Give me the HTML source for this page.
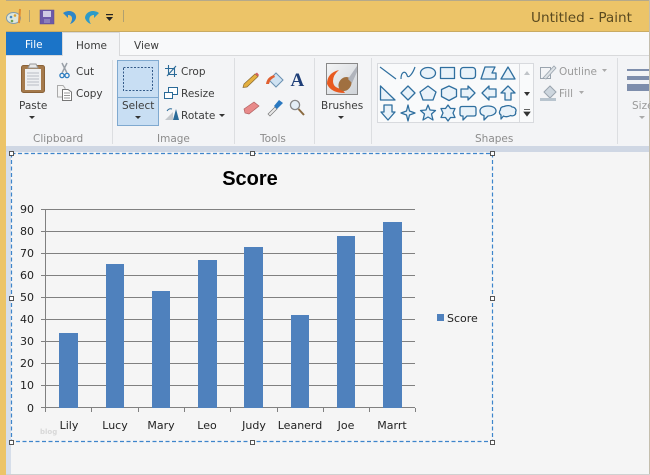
<!DOCTYPE html>
<html><head><meta charset="utf-8"><style>
html,body{margin:0;padding:0;background:#f5f5f5}
svg{display:block}
text{font-family:"DejaVu Sans","Liberation Sans",sans-serif;font-size:10.5px;fill:#3c3c3c}
.g{fill:#8c8c8c}.d{fill:#9a9a9a}.k{fill:#222;font-size:11px}
.s{fill:#e9f2f9;stroke:#2f6f9f;stroke-width:1.300;stroke-linejoin:round}
</style></head><body>
<svg width="650" height="475" viewBox="0 0 650 475" xmlns="http://www.w3.org/2000/svg">
<defs><linearGradient id="b" x1="0" y1="0" x2="1" y2="1"><stop offset="0" stop-color="#f4f5f6"/><stop offset="1" stop-color="#cfd3d8"/></linearGradient></defs>
<rect width="650" height="475" fill="#f5f5f5"/>
<!-- frame -->
<rect width="650" height="32" fill="#ecc468"/>
<rect width="650" height="1" fill="#b5a98a"/>
<rect y="31" width="650" height="1" fill="#c9ab62"/>
<rect y="0" width="6" height="475" fill="#ecc468"/>
<rect x="649" y="0" width="1" height="475" fill="#c4bead"/>
<rect x="6" y="474" width="644" height="1" fill="#d0d0d0"/>
<!-- QAT -->
<ellipse cx="13.500" cy="18" rx="7" ry="5.500" fill="#dfe6da" stroke="#7f9bb0"/>
<circle cx="11" cy="17" r="1.300" fill="#4a8ac0"/><circle cx="15" cy="15.500" r="1.300" fill="#d9a030"/><circle cx="12" cy="21" r="1.300" fill="#70a050"/>
<path d="M20 9L19 23" stroke="#e08a30" stroke-width="2"/>
<rect x="29" y="10" width="1" height="12" fill="#b0a070"/>
<rect x="40" y="10" width="14" height="14" fill="#6d5aa8" stroke="#5a4a90" stroke-width=".5"/>
<rect x="43" y="11" width="8" height="6" fill="#d0cce4"/><rect x="44" y="19" width="6" height="4" fill="#8c80bc"/>
<path d="M65 12C71 9 77 13 76 18C75 21 73 23 70 24C73 20 73 15 68 15L68 18L63 13L68 10Z" fill="#2d86c8"/>
<path d="M97 12C91 9 85 13 85 18C86 21 88 23 91 24C88 20 89 15 94 15L94 18L99 13L94 10Z" fill="#2d9bc8"/>
<rect x="106" y="14" width="7" height="1.200" fill="#222"/><path d="M106 17H113L109.500 21Z" fill="#222"/>
<rect x="123" y="10" width="1" height="12" fill="#b0a070"/>
<text x="531" y="22" style="font-size:13.600px;fill:#5a4a20">Untitled - Paint</text>
<!-- tabs -->
<rect x="6" y="32" width="643" height="24" fill="#f8f9fa"/>
<rect x="6" y="55" width="643" height="1" fill="#d8d9db"/>
<rect x="6" y="32" width="56" height="23" fill="#1b74c8"/>
<text x="25" y="48" style="fill:#fff;font-size:10.500px">File</text>
<rect x="62.500" y="32.500" width="57" height="24" fill="#f3f4f6" stroke="#d8d9db"/>
<rect x="63" y="54" width="56" height="3" fill="#f3f4f6"/>
<text x="76" y="49">Home</text>
<text x="134" y="49">View</text>
<!-- ribbon -->
<rect x="6" y="56" width="643" height="90" fill="#f3f4f6"/>
<rect x="6" y="146" width="643" height="6" fill="#cfd7e4"/>
<rect x="6" y="152" width="5" height="322" fill="#d6deea"/>
<g fill="#dcdee1"><rect x="112" y="60" width="1" height="84"/><rect x="234" y="58" width="1" height="86"/><rect x="314" y="58" width="1" height="86"/><rect x="371" y="58" width="1" height="86"/><rect x="617" y="58" width="1" height="86"/></g>
<!-- Paste -->
<rect x="21.500" y="65.500" width="23" height="27" rx="2" fill="#a57a4c" stroke="#8a6238"/>
<rect x="25" y="69" width="16" height="21" fill="#eef0f2"/>
<path d="M27 73H39M27 76H39M27 79H39M27 82H39M27 85H39" stroke="#b8bcc4"/>
<path d="M28 68L30 64H36L38 68Z" fill="#e8e8e8" stroke="#999"/>
<text x="19" y="109">Paste</text><path d="M29 116H35L32 119Z" fill="#333"/>
<!-- Cut/Copy -->
<path d="M62 63L67 73M67 63L62 73" stroke="#9aa0a8" stroke-width="1.500"/>
<circle cx="62" cy="75.500" r="2.100" fill="none" stroke="#2c7cc0" stroke-width="1.300"/><circle cx="67" cy="75.500" r="2.100" fill="none" stroke="#2c7cc0" stroke-width="1.300"/>
<text x="76" y="75">Cut</text>
<path d="M57.500 85.500H63L65 88V97H57.500Z" fill="#f4f4f4" stroke="#aaa"/>
<path d="M62.500 89.500H68L71.500 92V100.500H62.500Z" fill="#fff" stroke="#777"/>
<path d="M64 93H70M64 95.500H70M64 98H70" stroke="#999"/>
<text x="76" y="97">Copy</text>
<text x="33" y="142" class="g">Clipboard</text>
<!-- Select -->
<rect x="117.500" y="60.500" width="41" height="65" fill="#c8def3" stroke="#7fa9d0"/>
<path d="M118 97.500H158" stroke="#7fa9d0"/>
<rect x="123.500" y="67.500" width="29" height="23" fill="none" stroke="#335a88" stroke-dasharray="2 1.500"/>
<text x="122" y="109">Select</text><path d="M135 116H141L138 119Z" fill="#333"/>
<!-- Crop etc. -->
<path d="M165 68.500H174.500V77M168.500 65V74.500H177M167 76L176 66" fill="none" stroke="#2a6a98" stroke-width="1.100"/>
<text x="181" y="75">Crop</text>
<rect x="168.500" y="87.500" width="9" height="7" fill="#fff" stroke="#2a6a98"/><rect x="164.500" y="92.500" width="8" height="6" fill="#fff" stroke="#2a6a98"/>
<text x="181" y="97">Resize</text>
<path d="M165 120L173 112V120Z" fill="#c4c8cc"/><path d="M173 120L176 109L179 120Z" fill="#2a6a98"/>
<path d="M167 111Q169 108 172 109" fill="none" stroke="#2a6a98"/>
<text x="181" y="119">Rotate</text><path d="M219 114H225L222 117Z" fill="#333"/>
<text x="157" y="142" class="g">Image</text>
<!-- Tools -->
<path d="M244 84L255 74L258 76.500L247 87L243 87.500Z" fill="#e4b040" stroke="#8a6a30" stroke-width=".7"/><path d="M255 74L257 72.500L259 75L258 76.500Z" fill="#d06060"/>
<path d="M269 80L276 73L283 80L276 87Z" fill="#cfe2f2" stroke="#6a90b0"/><path d="M266 84Q267 77 274 75L275 77Q270 79 269 84Z" fill="#e06030"/>
<text x="290.500" y="86" style="font:bold 19px 'Liberation Serif',serif;fill:#1f3f78">A</text>
<path d="M244 109L254 102L259 106L249 114L245 113Z" fill="#e88a8a" stroke="#b06060" stroke-width=".7"/>
<path d="M268 114L275 107L277 109L270 116Z" fill="#e8e8e8" stroke="#777" stroke-width=".7"/><path d="M274 106L279 100L283 103L277 109Z" fill="#2a78c0"/>
<circle cx="295" cy="105" r="4.600" fill="#e4eef6" stroke="#888" stroke-width="1.300"/><path d="M298.500 109L304 115" stroke="#8a6a40" stroke-width="2"/>
<text x="260" y="142" class="g">Tools</text>
<!-- Brushes -->
<rect x="326.500" y="63.500" width="31" height="31" fill="url(#b)" stroke="#888"/>
<path d="M339 70Q327 73 327 84Q331 93 345 93L342 89Q333 88 333 81Q333 75 339 70Z" fill="#e85a20"/>
<ellipse cx="345" cy="84" rx="6" ry="7.500" fill="#a07040" transform="rotate(35 345 84)"/>
<path d="M348 79L357 66L357 72L352 83Z" fill="#b0b4bc"/>
<text x="321" y="109">Brushes</text><path d="M338 116H344L341 119Z" fill="#333"/>
<!-- Shapes -->
<rect x="377.500" y="63.500" width="156" height="59" fill="#f9fafb" stroke="#d8dade"/>
<path d="M519.500 64V122" stroke="#d8dade"/>
<path d="M380 67L396 79" stroke="#2f6f9f" stroke-width="1.200"/>
<path d="M401 79C401 72 405 70 407 75C408 80 413 73 415 67" fill="none" stroke="#2f6f9f" stroke-width="1.200"/>
<ellipse cx="428" cy="73" rx="7.500" ry="5.500" class="s"/>
<rect x="440.500" y="67.500" width="14" height="11" class="s"/>
<rect x="460.500" y="67.500" width="15" height="11" rx="3" class="s"/>
<path d="M481 79L485 67H495L492 73H496V79Z" class="s"/>
<path d="M501 79L508 67L515 79Z" class="s"/>
<path d="M380.500 86V100H395Z" class="s"/>
<path d="M408 86L415 93L408 100L401 93Z" class="s"/>
<path d="M428 86L436 92L433 100H423L420 92Z" class="s"/>
<path d="M449 86L456.500 89.500V96.500L449 100.500L441.500 96.500V89.500Z" class="s"/>
<path d="M461 89H468V86L475 93L468 100V97H461Z" class="s"/>
<path d="M496 89H489V86L482 93L489 100V97H496Z" class="s"/>
<path d="M508 86L515 93H511V100H505V93H501Z" class="s"/>
<path d="M384 105H392V112H395L388 120L381 112H384Z" class="s"/>
<path d="M408 105L409.500 111L415 113L409.500 115L408 121L406.500 115L401 113L406.500 111Z" class="s"/>
<path d="M428 105L430 110L435.500 110.500L431.500 114L433 120L428 117L423 120L424.500 114L420.500 110.500L426 110Z" class="s"/>
<path d="M448 105L450.500 108.500H455L453 113L455 117.500H450.500L448 121L445.500 117.500H441L443 113L441 108.500H445.500Z" class="s"/>
<path d="M462 106.500H474Q476 106.500 476 108.500V114Q476 116 474 116H467L463 120V116H462Q460 116 460 114V108.500Q460 106.500 462 106.500Z" class="s"/>
<path d="M488 106C493 106 496 108 496 111C496 114 492 116 488 116L484 120V115.500C481 115 480 113 480 111C480 108 483 106 488 106Z" class="s"/>
<path d="M504 106.500C507 105 511 105.500 512 107C515 107 517 110 515.500 112C516.500 115 513 116.500 510.500 115.500C508 117 505 117 503.500 116L501 119V115C499 114 499 111 500.500 110C500 108 502 106.500 504 106.500Z" class="s"/>
<path d="M524 75H530L527 71Z" fill="#c0c4c8"/><path d="M524 92H530L527 96Z" fill="#333"/>
<path d="M524 109.500H530M524 112H530L527 116Z" stroke="#333" fill="#333" stroke-width=".8"/>
<text x="475" y="142" class="g">Shapes</text>
<!-- Outline/Fill -->
<rect x="540.500" y="67.500" width="10" height="11" fill="none" stroke="#9aa4ae"/><path d="M543 78L554 66L556 68L546 79Z" fill="#dde2e6" stroke="#9aa4ae" stroke-width=".8"/>
<text x="559" y="75" class="d">Outline</text><path d="M602 69H607L604.500 72Z" fill="#aaa"/>
<path d="M544 92L550 86L556 92L550 98Z" fill="#cdd6de" stroke="#9aa4ae"/><rect x="540" y="98" width="16" height="3" fill="#b8c4ce"/>
<text x="559" y="97" class="d">Fill</text><path d="M579 91H584L581.500 94Z" fill="#aaa"/>
<!-- Size -->
<rect x="627" y="69" width="22" height="2" fill="#7e8eac"/><rect x="627" y="76" width="22" height="4" fill="#7e8eac"/><rect x="627" y="84" width="22" height="7" fill="#7e8eac"/>
<text x="632" y="109" class="d">Size</text><path d="M639 116H645L642 119Z" fill="#aaa"/>
<!-- Chart -->
<text x="250" y="185" text-anchor="middle" style="font:bold 20px 'Liberation Sans',sans-serif;fill:#000">Score</text>
<g stroke="#808080" fill="none">
<path d="M41 209.500H415M41 231.500H415M41 253.500H415M41 275.500H415M41 297.500H415M41 319.500H415M41 341.500H415M41 363.500H415M41 385.500H415M41 407.500H415"/>
<path d="M45.500 209V412M91.500 408V412M138.500 408V412M184.500 408V412M230.500 408V412M277.500 408V412M323.500 408V412M369.500 408V412M415.500 408V412"/>
</g>
<g fill="#4f81bd">
<rect x="59" y="333" width="19" height="75"/>
<rect x="106" y="264" width="18" height="144"/>
<rect x="152" y="291" width="18" height="117"/>
<rect x="198" y="260" width="19" height="148"/>
<rect x="244" y="247" width="19" height="161"/>
<rect x="291" y="315" width="18" height="93"/>
<rect x="337" y="236" width="18" height="172"/>
<rect x="383" y="222" width="19" height="186"/>
</g>
<g text-anchor="end" class="k">
<text x="34" y="213" class="k">90</text><text x="34" y="235" class="k">80</text><text x="34" y="257" class="k">70</text><text x="34" y="279" class="k">60</text><text x="34" y="301" class="k">50</text><text x="34" y="323" class="k">40</text><text x="34" y="345" class="k">30</text><text x="34" y="367" class="k">20</text><text x="34" y="389" class="k">10</text><text x="34" y="412" class="k">0</text>
</g>
<g text-anchor="middle">
<text x="69" y="429" class="k">Lily</text><text x="115" y="429" class="k">Lucy</text><text x="161" y="429" class="k">Mary</text><text x="207" y="429" class="k">Leo</text><text x="254" y="429" class="k">Judy</text><text x="300" y="429" class="k">Leanerd</text><text x="346" y="429" class="k">Joe</text><text x="392" y="429" class="k">Marrt</text>
</g>
<rect x="437" y="314" width="7" height="7" fill="#4f81bd"/>
<text x="447" y="322" class="k">Score</text>
<text x="40" y="434" style="font-size:7px;font-weight:bold;fill:#d8d8d8">blog</text>
<!-- selection -->
<rect x="11.500" y="153.500" width="481" height="288" fill="none" stroke="#3d85cb" stroke-width="1.200" stroke-dasharray="4 2.500"/>
<g fill="#fff" stroke="#555">
<rect x="9.500" y="151.500" width="4" height="4"/><rect x="250.500" y="151.500" width="4" height="4"/><rect x="490.500" y="151.500" width="4" height="4"/>
<rect x="9.500" y="296.500" width="4" height="4"/><rect x="490.500" y="296.500" width="4" height="4"/>
<rect x="9.500" y="440.500" width="4" height="4"/><rect x="250.500" y="440.500" width="4" height="4"/><rect x="490.500" y="440.500" width="4" height="4"/>
</g>
</svg>
</body></html>
